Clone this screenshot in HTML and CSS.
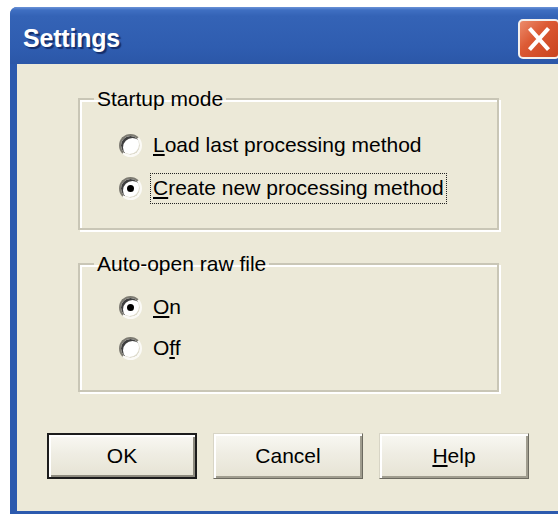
FILE: index.html
```html
<!DOCTYPE html>
<html lang="en">
<head>
<meta charset="utf-8">
<title>Settings</title>
<link rel="stylesheet" href="styles.css">
</head>
<body>
<div class="window">
  <div class="titlebar">
    <span class="title">Settings</span>
    <button class="close" type="button" aria-label="Close">
      <svg viewBox="0 0 42 40" width="42" height="40">
        <path d="M12 10 L30 30 M30 10 L12 30" stroke="#fff" stroke-width="4.5" stroke-linecap="square" fill="none"/>
      </svg>
    </button>
  </div>
  <div class="client">
    <fieldset class="group group-startup">
      <legend>Startup mode</legend>
      <label class="option">
        <span class="radio"></span>
        <span class="text"><u>L</u>oad last processing method</span>
      </label>
      <label class="option">
        <span class="radio checked"></span>
        <span class="text focused"><u>C</u>reate new processing method</span>
      </label>
    </fieldset>
    <fieldset class="group group-autoopen">
      <legend>Auto-open raw file</legend>
      <label class="option">
        <span class="radio checked"></span>
        <span class="text"><u>O</u>n</span>
      </label>
      <label class="option">
        <span class="radio"></span>
        <span class="text">O<u>f</u>f</span>
      </label>
    </fieldset>
    <div class="buttons">
      <button class="btn btn-default" type="button">OK</button>
      <button class="btn" type="button">Cancel</button>
      <button class="btn" type="button"><u>H</u>elp</button>
    </div>
  </div>
</div>
</body>
</html>
```
FILE: styles.css
```css
html, body {
  margin: 0;
  height: 100%;
  overflow: hidden;
  background: #fff;
}

body {
  font-family: "Liberation Sans", Arial, sans-serif;
  font-size: 21px;
  color: #000;
}

/* dialog frame */
.window {
  margin: 7px 0 0 10px;
  width: 560px;
  height: 507px;
  display: flex;
  flex-direction: column;
  background: #2c5aae;
  border-radius: 7px 7px 0 0;
}

.titlebar {
  flex: none;
  height: 57px;
  box-sizing: border-box;
  display: flex;
  align-items: center;
  padding: 6px 10px 0 13px;
  border-radius: 7px 7px 0 0;
  background: linear-gradient(#6b93d8 0, #3f6fc2 3px, #3463b6 9px, #2f5db0 40px, #2b57a8 57px);
}

.title {
  flex: 1;
  color: #fff;
  font-weight: bold;
  font-size: 25px;
  letter-spacing: -0.2px;
  text-shadow: 2px 2px 1px #142d6a;
}

.close {
  width: 42px;
  height: 40px;
  padding: 0;
  box-sizing: border-box;
  border: 2px solid #f3f0ee;
  border-radius: 5px;
  background: linear-gradient(135deg, #ec8c6c 0, #dc5a34 40%, #c9431f 100%);
  display: flex;
  align-items: center;
  justify-content: center;
}

.close svg {
  display: block;
}

/* dialog body */
.client {
  flex: 1;
  margin: 0 7px 3px 7px;
  background: #ece9d8;
  display: flex;
  flex-direction: column;
  align-items: flex-start;
  padding: 23px 0 0 61px;
  box-sizing: border-box;
}

.group {
  margin: 0;
  width: 421px;
  box-sizing: border-box;
  border: 2px solid #c9c6b6;
  box-shadow: inset 2px 2px 0 #fff, 2px 2px 0 #fff;
  padding: 0 0 0 14px;
  min-inline-size: 0;
}

.group legend {
  padding: 0 3px;
  line-height: 24px;
}

.group-startup {
  padding-bottom: 20px;
}

.group-startup .option:first-of-type {
  margin-top: 14px;
}

.group-startup .option + .option {
  margin-top: 3px;
}

.group-autoopen {
  margin-top: 22px;
  padding-bottom: 22px;
}

.group-autoopen .option:first-of-type {
  margin-top: 11px;
}

.group-autoopen .option + .option {
  margin-top: 1px;
}

.option {
  display: flex;
  align-items: center;
  height: 40px;
  margin-left: 25px;
}

.radio {
  position: relative;
  flex: none;
  width: 23px;
  height: 23px;
  box-sizing: border-box;
  border-radius: 50%;
  border: 2px solid;
  border-color: #7d7b72 #fbfaf6 #fbfaf6 #7d7b72;
  background: #fff;
  box-shadow: inset 2px 2px 0 #3e3e3e, inset -1px -1px 0 #dedbcc;
  margin-right: 8px;
}

.radio.checked::after {
  content: "";
  position: absolute;
  left: 6px;
  top: 6px;
  width: 7px;
  height: 7px;
  border-radius: 50%;
  background: #000;
}

.text {
  padding: 2px 2px 3px;
  border: 1px dotted transparent;
}

.text.focused {
  border-color: #222;
}

/* command buttons */
.buttons {
  display: flex;
  gap: 16px;
  margin: 41px 0 0 -31px;
}

.btn {
  width: 150px;
  height: 46px;
  box-sizing: border-box;
  font: 21px "Liberation Sans", Arial, sans-serif;
  color: #000;
  padding: 0;
  border: 1px solid;
  border-color: #d8d5c6 #6c6a60 #6c6a60 #d8d5c6;
  background: linear-gradient(#f9f8f3, #efede3 45%, #e6e3d4);
  box-shadow: inset 2px 2px 0 #fff, inset -2px -2px 0 #a09d8f;
}

.btn-default {
  border: 2px solid #1c1c1c;
  box-shadow: inset 2px 2px 0 #fff, inset -2px -2px 0 #8e8b7f;
}
```
